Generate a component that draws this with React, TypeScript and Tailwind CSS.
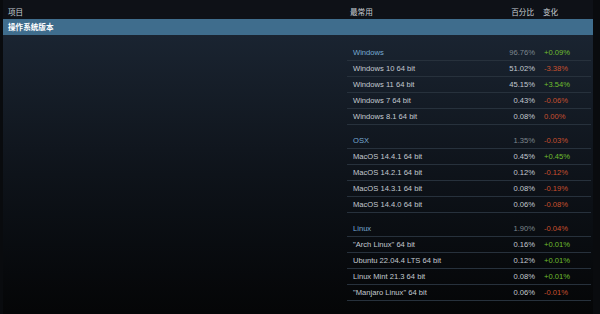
import React from 'react';

type Row = { name: string; pct: string; change: string };
type Section = { title: string; pct: string; change: string; rows: Row[] };

const sections: Section[] = [
  {
    title: 'Windows',
    pct: '96.76%',
    change: '+0.09%',
    rows: [
      { name: 'Windows 10 64 bit', pct: '51.02%', change: '-3.38%' },
      { name: 'Windows 11 64 bit', pct: '45.15%', change: '+3.54%' },
      { name: 'Windows 7 64 bit', pct: '0.43%', change: '-0.06%' },
      { name: 'Windows 8.1 64 bit', pct: '0.08%', change: '0.00%' },
    ],
  },
  {
    title: 'OSX',
    pct: '1.35%',
    change: '-0.03%',
    rows: [
      { name: 'MacOS 14.4.1 64 bit', pct: '0.45%', change: '+0.45%' },
      { name: 'MacOS 14.2.1 64 bit', pct: '0.12%', change: '-0.12%' },
      { name: 'MacOS 14.3.1 64 bit', pct: '0.08%', change: '-0.19%' },
      { name: 'MacOS 14.4.0 64 bit', pct: '0.06%', change: '-0.08%' },
    ],
  },
  {
    title: 'Linux',
    pct: '1.90%',
    change: '-0.04%',
    rows: [
      { name: '"Arch Linux" 64 bit', pct: '0.16%', change: '+0.01%' },
      { name: 'Ubuntu 22.04.4 LTS 64 bit', pct: '0.12%', change: '+0.01%' },
      { name: 'Linux Mint 21.3 64 bit', pct: '0.08%', change: '+0.01%' },
      { name: '"Manjaro Linux" 64 bit', pct: '0.06%', change: '-0.01%' },
    ],
  },
];

function Change({ value }: { value: string }) {
  const up = value.startsWith('+');
  return (
    <span className={up ? 'pl-[9px] text-[#6fbf2f]' : 'pl-[9px] text-[#c8502f]'}>{value}</span>
  );
}

function StatRow({ name, pct, change, head }: Row & { head?: boolean }) {
  return (
    <div className="grid h-[16px] grid-cols-[148px_40px_56px] items-center border-b border-[#27313c]">
      <span className={head ? 'pl-[6px] text-[#76a9d3]' : 'pl-[6px] text-[#c3cad1]'}>{name}</span>
      <span className={head ? 'text-right text-[#7f868e]' : 'text-right text-[#c3cad1]'}>{pct}</span>
      <Change value={change} />
    </div>
  );
}

export default function App() {
  return (
    <div
      className="h-[314px] w-[600px] overflow-hidden bg-[#090b0e] text-[7.6px] leading-[9px]"
      style={{ fontFamily: '"Liberation Sans", "Noto Sans CJK SC", sans-serif' }}
    >
      <div className="ml-[3px] flex h-full w-[590px] flex-col">
        {/* column headers */}
        <div className="flex h-[19px] bg-[#0e1117] pt-[8px] text-[#c6ccd2]">
          <div className="w-[344px] pl-[5px]">项目</div>
          <div className="grid w-[244px] grid-cols-[148px_39px_57px]">
            <span className="pl-[3px]">最常用</span>
            <span className="text-right">百分比</span>
            <span className="pl-[9px]">变化</span>
          </div>
        </div>

        {/* category bar */}
        <div className="flex h-[16px] items-center bg-[#3f6d8d] pl-[5px] font-bold text-white">操作系统版本</div>

        {/* body */}
        <div className="flex flex-1 bg-linear-to-b from-[#1a2431] via-[#0e131a] to-[#050607]">
          <div className="w-[344px]" />
          <div className="flex w-[244px] flex-col gap-[8px] pt-[10px]">
            {sections.map((s) => (
              <div key={s.title} className="flex flex-col">
                <StatRow name={s.title} pct={s.pct} change={s.change} head />
                {s.rows.map((r) => (
                  <StatRow key={r.name} {...r} />
                ))}
              </div>
            ))}
          </div>
        </div>
      </div>
    </div>
  );
}
